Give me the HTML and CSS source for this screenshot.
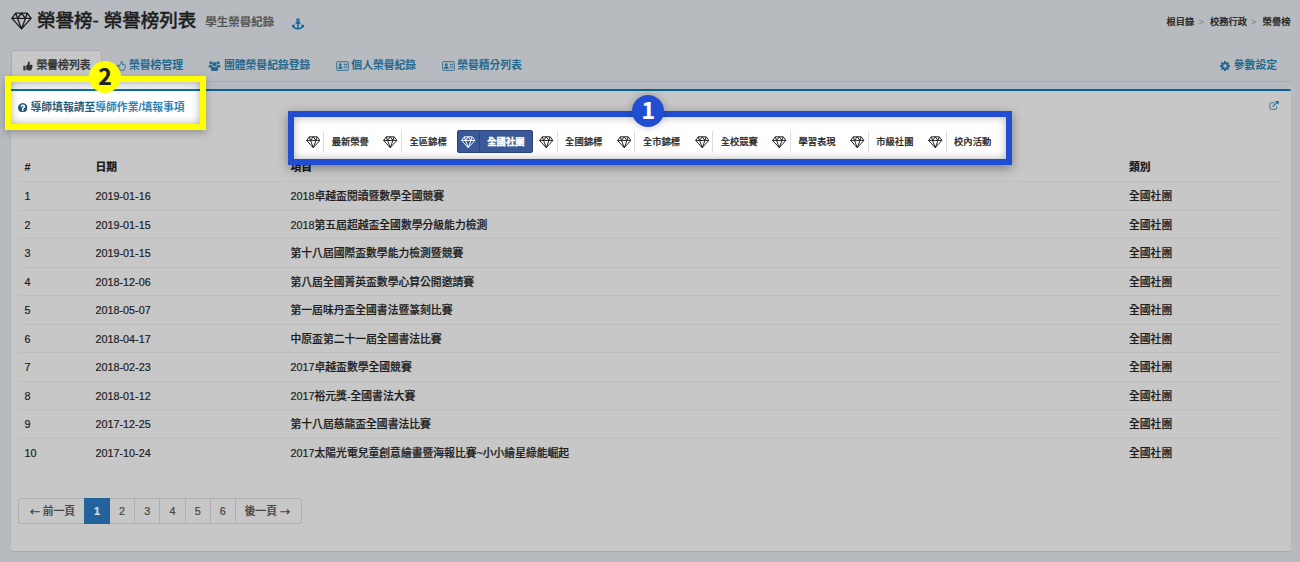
FILE: index.html
```html
<!DOCTYPE html>
<html lang="zh-Hant">
<head>
<meta charset="utf-8">
<title>榮譽榜</title>
<link rel="stylesheet" href="styles.css">
</head>
<body>
<svg class="defs">
  <symbol id="gem" viewBox="0 0 24 20"><path fill="none" stroke="currentColor" stroke-width="1.6" stroke-linejoin="round" d="M5.5 1h13L23 7 12 19 1 7zM1 7h22M7.5 7L12 19l4.500-12M5.500 1l2 6L12 1l4.500 6 2-6"/></symbol>
  <symbol id="cog" viewBox="128 128 1536 1536"><path fill="currentColor" d="M1152 896q0-106-75-181t-181-75-181 75-75 181 75 181 181 75 181-75 75-181zm512-109v222q0 12-8 23t-20 13l-185 28q-19 54-39 91 35 50 107 138 10 12 10 25t-9 23q-27 37-99 108t-94 71q-12 0-26-9l-138-108q-44 23-91 38-16 136-29 186-7 28-36 28h-222q-14 0-24.500-8.500t-11.500-21.500l-28-184q-49-16-90-37l-141 107q-10 9-25 9-14 0-25-11-126-114-165-168-7-10-7-23 0-12 8-23 15-21 51-66.500t54-70.500q-27-50-41-99l-183-27q-13-2-21-12.500t-8-23.500v-222q0-12 8-23t19-13l186-28q14-46 39-92-40-57-107-138-10-12-10-24 0-10 9-23 26-36 98.500-107.500t94.500-71.500q13 0 26 10l138 107q44-23 91-38 16-136 29-186 7-28 36-28h222q14 0 24.500 8.500t11.500 21.500l28 184q49 16 90 37l142-107q9-9 24-9 13 0 25 10 129 119 165 170 7 8 7 22 0 12-8 23-15 21-51 66.500t-54 70.500q26 50 41 98l183 28q13 2 21 12.500t8 23.500z"/></symbol>
  <symbol id="question" viewBox="128 128 1536 1536"><path fill="currentColor" d="M1024 1376v-192q0-14-9-23t-23-9h-192q-14 0-23 9t-9 23v192q0 14 9 23t23 9h192q14 0 23-9t9-23zm256-672q0-88-55.500-163t-138.500-116-170-41q-243 0-371 213-15 24 8 42l132 100q7 6 19 6 16 0 25-12 53-68 86-92 34-24 86-24 48 0 85.500 26t37.500 59q0 38-20 61t-68 45q-63 28-115.500 86.500t-52.500 125.500v36q0 14 9 23t23 9h192q14 0 23-9t9-23q0-19 21.500-49.500t54.500-49.500q32-18 49-28.500t46-35 44.500-48 28-60.500 12.500-81zm384 192q0 209-103 385.500t-279.500 279.500-385.500 103-385.500-103-279.500-279.500-103-385.500 103-385.500 279.500-279.500 385.500-103 385.500 103 279.500 279.500 103 385.500z"/></symbol>
  <symbol id="external" viewBox="0 0 18 16"><path fill="none" stroke="currentColor" stroke-width="1.500" d="M10 3H4Q1.500 3 1.500 5.500v7Q1.500 15 4 15h7q2.500 0 2.500-2.500V9.500"/><path fill="none" stroke="currentColor" stroke-width="2" d="M6.500 10L15 2"/><path fill="currentColor" d="M11 0h6.500v6.500z"/></symbol>
  <symbol id="anchor" viewBox="0 0 18 18"><path fill="none" stroke="currentColor" stroke-width="2.200" d="M9 5.500V16M5.300 7.600h7.400M2 12q1.500 4 7 4.300 5.500-.3 7-4.300"/><circle cx="9" cy="3.200" r="1.900" fill="none" stroke="currentColor" stroke-width="1.800"/><path fill="currentColor" d="M.3 10.300h4.800L.3 14.500zM17.700 10.300h-4.800l4.800 4.200z"/></symbol>
  <symbol id="thumb" viewBox="0 0 16 16"><path fill="currentColor" d="M.5 7.500H4V15H.5zM5 7.500C7.500 6 7.700 4 8 2.200 8.200.8 9 .5 9.700.8c1.900.8 1.500 3.200.6 5.200h3.200c2 0 2.300 2 1.200 2.800.7.900.4 2-.4 2.500.3 1-.1 1.700-.8 2.100.1 1.300-.7 1.900-2 1.900-3 0-4.300-.7-6.500-1.200z"/></symbol>
  <symbol id="thumb-o" viewBox="0 0 16 16"><path fill="none" stroke="currentColor" stroke-width="1.500" stroke-linejoin="round" d="M1 7.500h3.500V14H1zM4.500 7.500C7.500 6 7.700 4 8 2.200 8.200.8 9 .7 9.700 1c1.700.8 1.300 3 .4 5h3.400c2 0 2.100 2 1.100 2.800.6.900.3 2-.5 2.500.3 1-.1 1.600-.8 2 0 1.100-.7 1.600-2 1.600-3 0-4.300-.7-6.300-1.100"/></symbol>
  <symbol id="users" viewBox="0 0 20 17"><g fill="currentColor"><circle cx="4" cy="3" r="2.700"/><circle cx="16" cy="3" r="2.700"/><circle cx="10" cy="5.500" r="3.600"/><path d="M0 10.500C0 8 .5 6.300 2 6.300c1.500 1 2.500 1 3.700.3.200 1.300.6 2.300 1.300 3-1.300 0-2.300.5-3 1.400H1.500C.6 11 0 10.900 0 10.500zM20 10.500c0-2.500-.5-4.200-2-4.200-1.500 1-2.500 1-3.700.3-.2 1.300-.6 2.300-1.300 3 1.300 0 2.300.5 3 1.400h2.500c.9 0 1.500-.1 1.500-.5zM3.800 14.500c0-3 1-5 2.900-5 2 1.700 4.600 1.700 6.600 0 1.900 0 2.900 2 2.900 5 0 1.500-1 2.300-2.300 2.300H6.100c-1.300 0-2.300-.8-2.300-2.300z"/></g></symbol>
  <symbol id="card" viewBox="0 0 20 16"><rect x=".7" y="1" width="18.600" height="14" rx="1.200" fill="none" stroke="currentColor" stroke-width="1.400"/><g fill="currentColor"><circle cx="6.500" cy="5.800" r="2.200"/><path d="M2.800 12.200q0-4 2.200-4 1.500.8 3 0 2.200 0 2.200 4z"/><path d="M12 4.500h5.500v1.400H12zM12 7.400h5.500v1.400H12zM12 10.300h5.500v1.400H12z"/></g></symbol>
</svg>

<header class="page-head">
  <h1 class="title"><svg class="title-gem"><use href="#gem"/></svg>榮譽榜- 榮譽榜列表</h1>
  <span class="subtitle">學生榮譽紀錄</span>
  <svg class="anchor"><use href="#anchor"/></svg>
  <nav class="crumbs"><span>根目錄</span><i>&gt;</i><span>校務行政</span><i>&gt;</i><span>榮譽榜</span></nav>
</header>

<nav class="tabs">
  <a class="tab active"><svg class="ic"><use href="#thumb"/></svg>榮譽榜列表</a>
  <a class="tab"><svg class="ic"><use href="#thumb-o"/></svg>榮譽榜管理</a>
  <a class="tab"><svg class="ic wide"><use href="#users"/></svg>團體榮譽紀錄登錄</a>
  <a class="tab"><svg class="ic wide"><use href="#card"/></svg>個人榮譽紀錄</a>
  <a class="tab"><svg class="ic wide"><use href="#card"/></svg>榮譽積分列表</a>
  <a class="tab settings"><svg class="ic"><use href="#cog"/></svg>參數設定</a>
</nav>

<main class="panel">
  <div class="panel-tools"><svg class="external"><use href="#external"/></svg></div>

  <div class="filters">
    <span class="step step-one">1</span>
    <a class="filter"><svg><use href="#gem"/></svg><span>最新榮譽</span></a>
    <a class="filter"><svg><use href="#gem"/></svg><span>全區錦標</span></a>
    <a class="filter selected"><svg><use href="#gem"/></svg><span>全國社團</span></a>
    <a class="filter"><svg><use href="#gem"/></svg><span>全國錦標</span></a>
    <a class="filter"><svg><use href="#gem"/></svg><span>全市錦標</span></a>
    <a class="filter"><svg><use href="#gem"/></svg><span>全校競賽</span></a>
    <a class="filter"><svg><use href="#gem"/></svg><span>學習表現</span></a>
    <a class="filter"><svg><use href="#gem"/></svg><span>市級社團</span></a>
    <a class="filter"><svg><use href="#gem"/></svg><span>校內活動</span></a>
  </div>

  <div class="table">
    <div class="row head"><b>#</b><b>日期</b><b>項目</b><b>類別</b></div>
    <div class="row"><span>1</span><span>2019-01-16</span><span>2018卓越盃閱讀暨數學全國競賽</span><span>全國社團</span></div>
    <div class="row"><span>2</span><span>2019-01-15</span><span>2018第五屆超越盃全國數學分級能力檢測</span><span>全國社團</span></div>
    <div class="row"><span>3</span><span>2019-01-15</span><span>第十八屆國際盃數學能力檢測暨競賽</span><span>全國社團</span></div>
    <div class="row"><span>4</span><span>2018-12-06</span><span>第八屆全國菁英盃數學心算公開邀請賽</span><span>全國社團</span></div>
    <div class="row"><span>5</span><span>2018-05-07</span><span>第一屆味丹盃全國書法暨篆刻比賽</span><span>全國社團</span></div>
    <div class="row"><span>6</span><span>2018-04-17</span><span>中原盃第二十一屆全國書法比賽</span><span>全國社團</span></div>
    <div class="row"><span>7</span><span>2018-02-23</span><span>2017卓越盃數學全國競賽</span><span>全國社團</span></div>
    <div class="row"><span>8</span><span>2018-01-12</span><span>2017裕元獎-全國書法大賽</span><span>全國社團</span></div>
    <div class="row"><span>9</span><span>2017-12-25</span><span>第十八屆慈龍盃全國書法比賽</span><span>全國社團</span></div>
    <div class="row"><span>10</span><span>2017-10-24</span><span>2017太陽光電兒童創意繪畫暨海報比賽~小小繪星綠能崛起</span><span>全國社團</span></div>
  </div>

  <nav class="pager"><a class="prev"><i class="arrow">←</i>前一頁</a><a class="current">1</a><a>2</a><a>3</a><a>4</a><a>5</a><a>6</a><a class="next">後一頁<i class="arrow">→</i></a></nav>
</main>

<aside class="callout">
  <span class="step step-two">2</span>
  <p class="hint"><svg class="q"><use href="#question"/></svg>導師填報請至<a>導師作業/填報事項</a></p>
</aside>
</body>
</html>
```
FILE: styles.css
```css
* { box-sizing: border-box; }
body {
  margin: 0; width: 1300px; height: 562px; overflow: hidden; position: relative;
  background: #b7bbbf; color: #1d1d1d;
  font: 500 10.8px/1.43 "Liberation Sans", "Noto Sans CJK TC", sans-serif;
  -webkit-text-stroke: .2px currentColor;
}
.defs { position: absolute; width: 0; height: 0; }
svg { flex: none; display: block; }

.page-head { display: flex; align-items: center; height: 42px; padding: 0 9.500px 0 11px; }
.title { display: flex; align-items: center; margin: 0; font-size: 18.5px; font-weight: 500; line-height: 40px; white-space: nowrap; -webkit-text-stroke-width: .35px; }
.title-gem { width: 21px; height: 18px; margin-right: 5px; }
.subtitle { margin: 3px 0 0 9px; font-size: 11.5px; color: #555; font-weight: 700; -webkit-text-stroke-width: 0; }
.anchor { width: 12px; height: 12px; margin: 6px 0 0 17.500px; color: #0d629b; }
.crumbs { display: flex; margin: 3px 0 0 auto; font-size: 9.300px; }
.crumbs i { width: 15.500px; padding-left: 4px; font-style: normal; color: #8d8d8d; }

.tabs { display: flex; height: 32px; margin: 8px 9px 0 11px; border-bottom: 1px solid #a9abad; }
.tab { display: flex; align-items: center; height: 31px; padding: 1px 12px 0 12.500px; color: #24698f; font-weight: 700; white-space: nowrap; -webkit-text-stroke-width: 0; }
.tab + .tab:not(.settings) { padding-right: 13px; }
.tab.active { width: 91px; margin-right: 1px; padding: 0 0 0 11px; color: #333; background: #c7c7c7; border: 1px solid #adadaf; border-bottom: 0; border-radius: 3px 3px 0 0; font-weight: 500; -webkit-text-stroke-width: .3px; }
.ic { width: 10px; height: 10px; margin-right: 3.500px; }
.ic.wide { width: 13px; margin-right: 2.500px; }
.settings { margin-left: auto; padding-right: 14px; }

.panel { width: 1280px; height: 462px; margin: 7px 0 0 11px; padding: 0 7.500px; background: #c7c7c7; border-top: 2px solid #09608f; border-radius: 2px; box-shadow: 0 1px 1px #a4a8ab; }
.panel-tools { display: flex; justify-content: flex-end; height: 20px; padding: 10px 4.500px 0; color: #1c6a96; }
.external { width: 10px; height: 9px; }

.filters {
  position: relative; z-index: 1; display: flex; gap: 2.300px; align-items: flex-start;
  width: 724px; height: 54px; margin: 0 0 0 269.200px; padding: 13px 0 0 8px;
  border: 6px solid #204dd2; background: #fff;
  box-shadow: 0 3px 10px rgba(0,0,0,.38), inset 0 0 9px rgba(0,0,0,.3);
}
.filter { display: flex; align-items: center; width: 75.500px; height: 23px; border: 1px solid transparent; border-radius: 2px; font-size: 9.300px; white-space: nowrap; }
.filter svg { width: 14.500px; height: 12.500px; margin: 1px 3px 0; }
.filter span { height: 22px; padding-left: 7.500px; line-height: 22px; border-left: 1px solid #ddd; }
.filter.selected { color: #fff; background: #3b5998; border-color: #2a447e; font-weight: 700; -webkit-text-stroke-width: .4px; }
.filter.selected span { border-left-color: #2c4784; }

.step { position: absolute; display: flex; align-items: center; justify-content: center; width: 32px; height: 32px; padding-bottom: 3px; border-radius: 50%; font: 700 23px/1 "Noto Sans CJK TC", sans-serif; }
.step-one { left: 338.500px; top: -22px; color: #fff; background: #204dd2; box-shadow: 0 0 8px rgba(0,0,0,.25); }
.step-two { z-index: 1; left: 78px; top: -21px; color: #222; background: #ffff00; }

.table { margin-top: -12px; }
.row { display: grid; grid-template-columns: 71px 195px 838.500px 1fr; align-items: center; width: 1265px; height: 28.550px; padding: 2px 0 0 6px; border-bottom: 1px solid #bebebe; }
.row.head { height: 29px; font-weight: 700; -webkit-text-stroke-width: 0; }
.row:last-child { border-bottom: 0; }

.pager { display: flex; width: 284px; height: 26px; margin: 31px 0 0 -.5px; border: 1px solid #afafaf; border-radius: 3px; color: #444; }
.pager a { width: 25.200px; display: flex; align-items: center; justify-content: center; border-right: 1px solid #afafaf; white-space: nowrap; }
.pager .prev { width: 65px; border-right: 0; }
.pager .current { width: 26px; margin: -1px 0; color: #ddd; background: #22639b; border: 0; font-weight: 700; }
.pager .next { width: 65px; border-right: 0; }
.arrow { font: normal 13px/1 "DejaVu Sans", sans-serif; margin: 0 2px; -webkit-text-stroke-width: 0; }

.callout {
  position: absolute; left: 5px; top: 76px; width: 201px; height: 54px; padding-top: 7px;
  border: 6px solid #ffff00; background: #f0f2f5;
  box-shadow: 0 3px 8px rgba(0,0,0,.25);
}
.callout::after { content: ""; position: absolute; inset: 0; box-shadow: inset 0 0 9px rgba(0,0,0,.33); }
.hint { display: flex; align-items: center; height: 35px; margin: 0; padding: 0 0 0 7px; color: #245f80; background: #fff; border-top: 2px solid #0c6ea5; font-weight: 700; white-space: nowrap; -webkit-text-stroke-width: 0; }
.hint a { color: #3485b6; }
.q { width: 9.500px; height: 9.500px; margin-right: 3px; }
```
